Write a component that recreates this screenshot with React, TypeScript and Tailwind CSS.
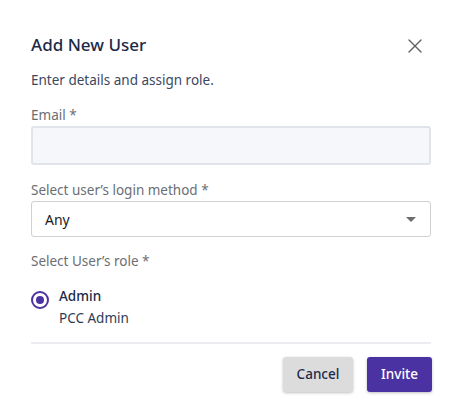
import { X } from 'lucide-react';

const App = () => {
  return (
    <div className="w-[458px] h-[417px] bg-white font-['Noto_Sans',sans-serif]">
      <div className="px-[31px] pt-[33px] pr-[28px]">
        {/* Header */}
        <div className="flex items-center justify-between h-6">
          <h1 className="text-[17px] font-medium text-[#1c2a4a] leading-6">Add New User</h1>
          <X className="w-[24px] h-[24px] text-[#5f5f5f] mr-[3px] mt-[2px]" strokeWidth={1.4} />
        </div>

        <p className="mt-[13px] text-[13.5px] leading-5 text-[#3a4862]">Enter details and assign role.</p>

        {/* Email */}
        <label className="block mt-[15px] text-[13.5px] leading-5 text-[#6b6e73]">Email *</label>
        <div className="mt-[1px] mr-[-1px] h-[39px] rounded-[3px] border-2 border-[#e1e4e8] bg-[#f5f7fa]" />

        {/* Login method */}
        <label className="block mt-[15px] text-[13.5px] leading-5 text-[#6b6e73]">
          Select user’s login method *
        </label>
        <div className="mt-[1px] mr-[-1px] h-[36px] rounded-[3px] border border-[#cfd1d4] bg-white flex items-center justify-between pl-[13px] pr-[14px]">
          <span className="text-[14px] text-[#1b1b1b]">Any</span>
          <svg width="10" height="5" viewBox="0 0 10 5">
            <path d="M0 0 L10 0 L5 5 Z" fill="#6d6d6d" />
          </svg>
        </div>

        {/* Role */}
        <label className="block mt-[14px] text-[13.5px] leading-5 text-[#6b6e73]">Select User’s role *</label>
        <div className="mt-[15px] flex items-start gap-[10px]">
          <div className="mt-[5px] w-[18px] h-[18px] rounded-full border-2 border-[#4b32a3] flex items-center justify-center">
            <div className="w-[8px] h-[8px] rounded-full bg-[#4b32a3]" />
          </div>
          <div>
            <div className="text-[13.5px] leading-5 font-medium text-[#1c2a4a]">Admin</div>
            <div className="mt-[2px] text-[13.5px] leading-5 text-[#2e3b55]">PCC Admin</div>
          </div>
        </div>

        <div className="mt-[14px] mr-[-1px] h-[2px] bg-[#ececf1]" />

        {/* Actions */}
        <div className="mt-[13px] mr-[-2px] flex justify-end gap-[14px]">
          <button className="w-[70px] h-[35px] rounded-[3px] bg-[#dcdcdc] shadow-[0_1px_3px_rgba(0,0,0,0.25)] text-[13.5px] font-medium text-[#1c2a4a]">
            Cancel
          </button>
          <button className="w-[65px] h-[35px] rounded-[3px] bg-[#4b32a3] shadow-[0_1px_3px_rgba(0,0,0,0.25)] text-[13.5px] font-medium text-white">
            Invite
          </button>
        </div>
      </div>
    </div>
  );
};

export default App;
